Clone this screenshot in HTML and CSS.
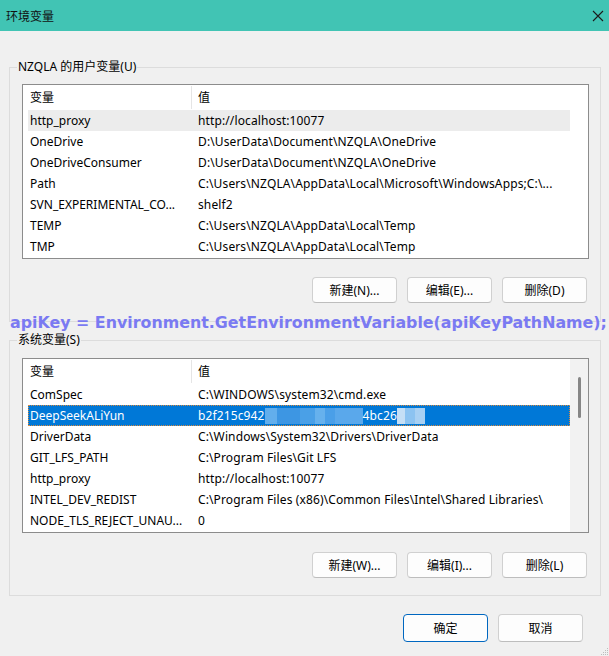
FILE: index.html
```html
<!DOCTYPE html>
<html lang="zh-CN">
<head>
<meta charset="utf-8">
<title>环境变量</title>
<link rel="stylesheet" href="styles.css">
</head>
<body>
<div class="titlebar">
  <span class="title">环境变量</span>
  <span class="close"><svg width="12" height="12" viewBox="0 0 12 12"><path d="M1 1 L11 11 M11 1 L1 11" stroke="#1b1b1b" stroke-width="1.1" fill="none"/></svg></span>
</div>

<fieldset class="group group-user">
  <legend>NZQLA 的用户变量(U)</legend>
  <div class="list">
    <div class="list-main">
      <div class="list-head"><div class="hc1">变量</div><div class="hc2">值</div></div>
      <div class="rows">
        <div class="row hot"><span class="c1">http_proxy</span><span class="c2">http://localhost:10077</span></div>
        <div class="row"><span class="c1">OneDrive</span><span class="c2">D:\UserData\Document\NZQLA\OneDrive</span></div>
        <div class="row"><span class="c1">OneDriveConsumer</span><span class="c2">D:\UserData\Document\NZQLA\OneDrive</span></div>
        <div class="row"><span class="c1">Path</span><span class="c2">C:\Users\NZQLA\AppData\Local\Microsoft\WindowsApps;C:\...</span></div>
        <div class="row"><span class="c1">SVN_EXPERIMENTAL_CO...</span><span class="c2">shelf2</span></div>
        <div class="row"><span class="c1">TEMP</span><span class="c2">C:\Users\NZQLA\AppData\Local\Temp</span></div>
        <div class="row"><span class="c1">TMP</span><span class="c2">C:\Users\NZQLA\AppData\Local\Temp</span></div>
      </div>
    </div>
    <div class="scroll scroll-empty"></div>
  </div>
  <div class="btns">
    <button class="btn">新建(N)...</button>
    <button class="btn">编辑(E)...</button>
    <button class="btn">删除(D)</button>
  </div>
</fieldset>

<fieldset class="group group-sys">
  <legend>系统变量(S)</legend>
  <div class="list">
    <div class="list-main">
      <div class="list-head"><div class="hc1">变量</div><div class="hc2">值</div></div>
      <div class="rows">
        <div class="row"><span class="c1">ComSpec</span><span class="c2">C:\WINDOWS\system32\cmd.exe</span></div>
        <div class="row selected"><span class="c1">DeepSeekALiYun</span><span class="c2">b2f215c942<span class="blur b1"></span><span class="blur b2"></span><span class="blur b3"></span><span class="blur b4"></span><span class="blur b5"></span><span class="blur b6"></span>4bc26<span class="blur b7"></span><span class="blur b8"></span><span class="blur b9"></span></span></div>
        <div class="row"><span class="c1">DriverData</span><span class="c2">C:\Windows\System32\Drivers\DriverData</span></div>
        <div class="row"><span class="c1">GIT_LFS_PATH</span><span class="c2">C:\Program Files\Git LFS</span></div>
        <div class="row"><span class="c1">http_proxy</span><span class="c2">http://localhost:10077</span></div>
        <div class="row"><span class="c1">INTEL_DEV_REDIST</span><span class="c2">C:\Program Files (x86)\Common Files\Intel\Shared Libraries\</span></div>
        <div class="row"><span class="c1">NODE_TLS_REJECT_UNAU...</span><span class="c2">0</span></div>
      </div>
    </div>
    <div class="scroll scroll-track"><div class="thumb"></div></div>
  </div>
  <div class="btns">
    <button class="btn">新建(W)...</button>
    <button class="btn">编辑(I)...</button>
    <button class="btn">删除(L)</button>
  </div>
</fieldset>

<div class="footer">
  <button class="btn btn-lg btn-primary">确定</button>
  <button class="btn btn-lg">取消</button>
</div>

<div class="code">apiKey = Environment.GetEnvironmentVariable(apiKeyPathName);</div>

<svg class="grip" width="9" height="9" viewBox="0 0 9 9">
  <g fill="#bdbdbd">
    <rect x="7" y="1" width="1" height="1"/>
    <rect x="5" y="3" width="1" height="1"/><rect x="7" y="3" width="1" height="1"/>
    <rect x="3" y="5" width="1" height="1"/><rect x="5" y="5" width="1" height="1"/><rect x="7" y="5" width="1" height="1"/>
    <rect x="1" y="7" width="1" height="1"/><rect x="3" y="7" width="1" height="1"/><rect x="5" y="7" width="1" height="1"/><rect x="7" y="7" width="1" height="1"/>
  </g>
</svg>
</body>
</html>
```

FILE: styles.css
```css
* { box-sizing: border-box; }
html, body { margin: 0; padding: 0; }
body {
  width: 609px;
  height: 656px;
  background: #f0f0f0;
  font-family: "Noto Sans", "Noto Sans CJK SC", sans-serif;
  font-size: 12px;
  color: #000;
  overflow: hidden;
  position: relative;
}

.titlebar {
  height: 31px;
  background: #41c4b4;
  display: flex;
  align-items: center;
  justify-content: space-between;
  padding: 0 5px 0 6px;
}
.title { font-size: 12px; color: #111; }
.close { display: flex; }

.group {
  margin: 28px 8px 0 9px;
  padding: 9px 11px 18px 12px;
  border: 1px solid #dcdcdc;
  min-width: 0;
}
.group-sys { margin-top: 10px; padding-top: 10px; padding-bottom: 17px; }
.group legend {
  padding: 0 1px;
  margin-left: -5px;
  line-height: 16px;
  font-size: 12px;
}

.list {
  display: flex;
  height: 175px;
  background: #fff;
  border: 1px solid #8c8c8c;
}
.list-main { width: 547px; }
.scroll { width: 18px; }
.scroll-track { background: #f2f2f2; }
.thumb {
  width: 3px;
  height: 41px;
  margin: 18px 0 0 8px;
  background: #868686;
  border-radius: 2px;
}

.list-head { display: flex; height: 25px; }
.hc1 {
  width: 169px;
  height: 23px;
  margin-top: 1px;
  padding-left: 7px;
  line-height: 23px;
  border-right: 1px solid #e5e5e5;
}
.hc2 { padding-left: 6px; line-height: 25px; }

.rows { margin-left: 5px; width: 542px; }
.row {
  display: flex;
  height: 21px;
  line-height: 21px;
  white-space: nowrap;
}
.c1 { width: 170px; flex: none; padding-left: 2px; overflow: hidden; }
.c2 { flex: 1; overflow: hidden; letter-spacing: 0.12px; }
.row.hot { background: #ececec; }
.row.selected {
  background: #0078d7;
  color: #fff;
  outline: 1px dotted #d98a3e;
  outline-offset: -1px;
}

.blur { display: inline-block; height: 16px; vertical-align: middle; margin-top: -2px; }
.b1 { width: 12px; background: #62aeec; }
.b2 { width: 23px; background: #3d96e3; }
.b3 { width: 15px; background: #4aa0e7; }
.b4 { width: 10px; background: #66b1ed; }
.b5 { width: 10px; background: #4a9fe8; }
.b6 { width: 28px; background: #5aa8eb; }
.b7 { width: 8px; background: #c5dff6; }
.b8 { width: 10px; background: #8cc3f1; }
.b9 { width: 10px; background: #a8d0f3; }

.btns {
  display: flex;
  justify-content: flex-end;
  gap: 10px;
  margin-top: 18px;
  padding-right: 2px;
}
.group-sys .btns { margin-top: 19px; }
.btn {
  width: 85px;
  height: 26px;
  padding: 0;
  background: #fdfdfd;
  border: 1px solid #d0d0d0;
  border-bottom-color: #bdbdbd;
  border-radius: 4px;
  font-family: inherit;
  font-size: 12px;
  color: #000;
  display: flex;
  align-items: center;
  justify-content: center;
}
.footer {
  display: flex;
  justify-content: flex-end;
  gap: 10px;
  margin-top: 18px;
  padding-right: 26px;
}
.btn-lg { height: 28px; }
.btn-primary { border-color: #0067c0; }

.code {
  position: absolute;
  left: 10px;
  top: 314px;
  font-family: "DejaVu Sans", sans-serif;
  font-weight: bold;
  font-size: 15.85px;
  line-height: 18px;
  color: #7a7af2;
  white-space: nowrap;
}

.grip { position: absolute; right: 0; bottom: 0; }
```
